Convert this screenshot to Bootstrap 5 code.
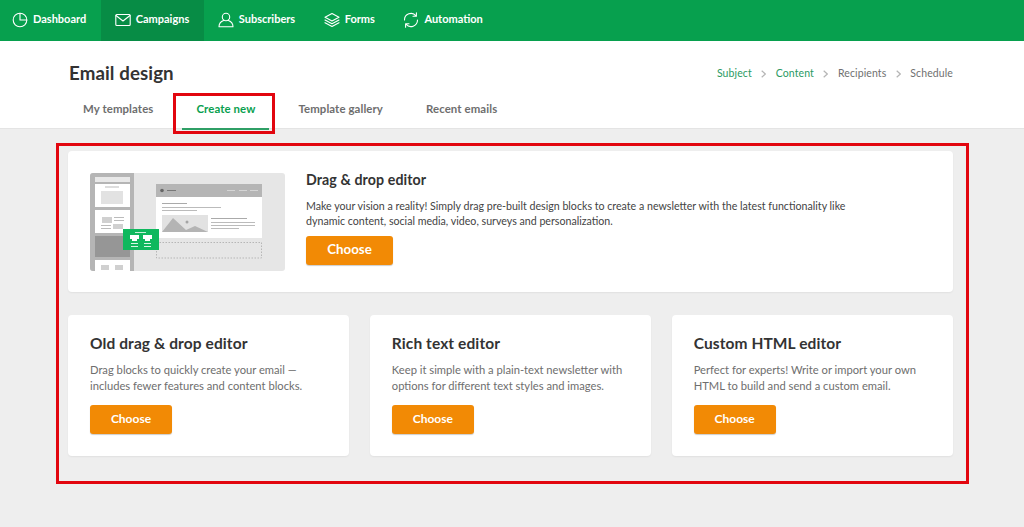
<!DOCTYPE html>
<html lang="en">
<head>
<meta charset="utf-8">
<title>Email design</title>
<link href="https://cdn.jsdelivr.net/npm/bootstrap@5.3.0/dist/css/bootstrap.min.css" rel="stylesheet">
<style>
html,body{height:527px;overflow:hidden}
body{background:#eeeeee;font-family:"Lato","Liberation Sans",sans-serif;color:#333;position:relative}
.topbar{background:#07a04e;height:41px;padding:0}
.topitem{display:flex;align-items:center;gap:5px;height:41px;padding:0 14.500px 2px 14px;color:#fff;font-size:11px;font-weight:700;letter-spacing:0;text-decoration:none}
.topitem:first-child{padding-left:12px}
.topitem svg{width:16px;height:16px;flex:none;fill:none;stroke:#fff;stroke-width:1.1;stroke-linecap:round;stroke-linejoin:round}
.topitem.current{background:#078c45}
.headarea{height:88px;background:#fff;border-bottom:1px solid #e4e4e4;padding:0 71px 0 69px}
.pagetitle{font-size:18.7px;font-weight:700;margin:0;color:#333;line-height:22px;letter-spacing:.1px}
.headtop{padding-top:21px}
.steps{font-size:10.5px;color:#707070;gap:9.5px;letter-spacing:.1px;padding-top:4px}
.steps .done{color:#2a9a63}
.steps svg{width:5px;height:8px;fill:none;stroke:#b5b5b5;stroke-width:1.2}
.tabstrip{margin-top:11px;gap:0}
.tabitem{display:block;height:35px;line-height:28px;font-size:11.4px;font-weight:700;color:#6e6e6e;text-decoration:none;padding:0 14px;letter-spacing:.1px;margin-right:15px;border-bottom:2px solid transparent;text-align:center}
.tabitem.current{color:#09a04f;border-bottom-color:#2f9f66}
.mainarea{padding:22px 71px 0 68px}
.panel{background:#fff;border-radius:4px;box-shadow:0 1px 2px rgba(0,0,0,.06);border:0}
.panelwide{height:141px;padding:21px 22px;margin-bottom:23px;gap:21px}
.paneltrio{gap:20.500px}
.paneltrio .panel{flex:1 1 0;height:141px;padding:19px 22px}
.art{width:195px;height:98px;flex:none;display:block;margin-top:1px}
.wideh{font-size:14.2px;font-weight:700;margin:0 0 10px;line-height:16px;color:#333;letter-spacing:.1px}
.widep{font-size:10.65px;line-height:15px;color:#444;margin:0 0 8px;width:560px}
.smallh{font-size:15.5px;font-weight:700;margin:0 0 10px;line-height:18px;color:#333;letter-spacing:.1px}
.smallp{font-size:11.2px;line-height:16px;color:#6e6e6e;margin:0 0 10.500px}
.pick{background:#f28a05;color:#fff;font-weight:700;border:0;border-radius:3px;box-shadow:0 1px 1px rgba(0,0,0,.2);padding:0;display:block;text-align:center}
.pick:hover{background:#f28a05;color:#fff}
.pickbig{width:87px;height:29px;font-size:13.3px;line-height:26px}
.picksmall{width:82px;height:29px;font-size:12px;line-height:27px}
.mark1,.mark2{position:absolute;border:3px solid #e2060f;pointer-events:none}
.mark1{left:173px;top:93px;width:102px;height:41px}
.mark2{left:56px;top:143px;width:913px;height:341px}
</style>
</head>
<body>
<nav class="topbar d-flex">
  <a class="topitem" href="#"><svg viewBox="0 0 16 16"><circle cx="8" cy="8" r="6.8"/><path d="M8 1.2V8h6.8"/></svg>Dashboard</a>
  <a class="topitem current" href="#"><svg viewBox="0 0 16 16"><rect x=".8" y="2.5" width="14.4" height="11" rx="1"/><path d="M1 3.5l7 5.5 7-5.5"/></svg>Campaigns</a>
  <a class="topitem" href="#"><svg viewBox="0 0 16 16"><circle cx="8" cy="5" r="3.7"/><path d="M5.6 8.5C2.6 9.5 1 11 1 14.8h14c0-3.8-1.6-5.3-4.6-6.3"/></svg>Subscribers</a>
  <a class="topitem" href="#"><svg viewBox="0 0 16 16"><path d="M8 1.5l7 3.8-7 3.8-7-3.8zM1 8l7 3.8L15 8M1 10.7l7 3.8 7-3.8"/></svg>Forms</a>
  <a class="topitem" href="#"><svg viewBox="0 0 16 16"><path d="M1.5 8A6.5 6.5 0 0 1 13 3.8M14.500 8A6.500 6.500 0 0 1 3 12.200M13.400 .8v3.400H10M2.600 15.200v-3.400H6"/></svg>Automation</a>
</nav>
<header class="headarea">
  <div class="headtop d-flex justify-content-between align-items-start">
    <h1 class="pagetitle">Email design</h1>
    <div class="steps d-flex align-items-center">
      <span class="done">Subject</span><svg viewBox="0 0 5 8"><path d="M.7.7L4.300 4 .7 7.300"/></svg>
      <span class="done">Content</span><svg viewBox="0 0 5 8"><path d="M.7.7L4.300 4 .7 7.300"/></svg>
      <span>Recipients</span><svg viewBox="0 0 5 8"><path d="M.7.7L4.300 4 .7 7.300"/></svg>
      <span>Schedule</span>
    </div>
  </div>
  <div class="tabstrip d-flex">
    <a class="tabitem" href="#">My templates</a>
    <a class="tabitem current" href="#">Create new</a>
    <a class="tabitem" href="#">Template gallery</a>
    <a class="tabitem" href="#">Recent emails</a>
  </div>
</header>
<main class="mainarea">
  <section class="panel panelwide d-flex">
    <svg class="art" viewBox="0 0 195 98">
      <rect width="195" height="98" rx="3" fill="#e6e6e6"/>
      <path d="M3 0h41v98H3a3 3 0 0 1-3-3V3a3 3 0 0 1 3-3z" fill="#b5b5b5"/>
      <rect x="5" y="4" width="35" height="5" fill="#e8e8e8"/>
      <rect x="5" y="11" width="35" height="23" fill="#fff"/>
      <rect x="11" y="18" width="22" height="13" fill="#e2e2e2"/>
      <rect x="15" y="13.500" width="14" height="1" fill="#bbb"/>
      <rect x="5" y="37" width="35" height="23" fill="#fff"/>
      <rect x="12" y="44" width="10" height="6" fill="#d0d0d0"/><rect x="24" y="44" width="10" height="1" fill="#bbb"/><rect x="24" y="47" width="10" height="1" fill="#bbb"/>
      <rect x="23" y="51" width="10" height="5" fill="#d0d0d0"/><rect x="11" y="52" width="10" height="1" fill="#bbb"/><rect x="11" y="55" width="10" height="1" fill="#bbb"/>
      <rect x="5" y="63" width="35" height="21" fill="#969696"/>
      <rect x="5" y="87" width="35" height="11" fill="#fff"/>
      <rect x="11" y="92" width="8" height="5" fill="#d0d0d0"/><rect x="25" y="92" width="8" height="5" fill="#d0d0d0"/>
      <rect x="66" y="11" width="106" height="13" fill="#b5b5b5"/>
      <circle cx="72" cy="17.500" r="1.800" fill="#666"/><rect x="77" y="17" width="9" height="1" fill="#777"/>
      <rect x="137" y="17" width="8" height="1" fill="#d5d5d5"/><rect x="149" y="17" width="8" height="1" fill="#d5d5d5"/><rect x="160" y="17" width="8" height="1" fill="#d5d5d5"/>
      <rect x="66" y="24" width="106" height="41" fill="#fff"/>
      <rect x="72" y="30" width="25" height="1" fill="#aaa"/><rect x="72" y="34" width="59" height="1" fill="#bbb"/><rect x="72" y="37" width="35" height="1" fill="#bbb"/>
      <rect x="72" y="42" width="46" height="17" fill="#e2e2e2"/>
      <path d="M72 59l11-14 13 12 9-4 13 6z" fill="#b4b4b4"/><circle cx="97" cy="49" r="1.500" fill="#a5a5a5"/>
      <rect x="121" y="45" width="36" height="1" fill="#aaa"/><rect x="121" y="49" width="44" height="1" fill="#bbb"/><rect x="121" y="52" width="44" height="1" fill="#bbb"/><rect x="121" y="55" width="28" height="1" fill="#bbb"/>
      <rect x="66.500" y="69.500" width="105" height="15.500" fill="none" stroke="#aaa" stroke-width=".8" stroke-dasharray="1.500 1.500"/>
      <rect x="33" y="56" width="36" height="21" fill="#10b85e"/>
      <rect x="45" y="59" width="11" height="1" fill="#c8f0d8"/>
      <path d="M40 62h9v4h-2v2h-5v-2h-2zM53 62h9v4h-2v2h-5v-2h-2z" fill="#fff"/>
      <rect x="41" y="70" width="7" height="1" fill="#d8f5e4"/><rect x="54" y="70" width="7" height="1" fill="#d8f5e4"/>
      <rect x="41" y="73" width="7" height="1" fill="#d8f5e4"/><rect x="54" y="73" width="7" height="1" fill="#d8f5e4"/>
    </svg>
    <div>
      <h2 class="wideh">Drag &amp; drop editor</h2>
      <p class="widep">Make your vision a reality! Simply drag pre-built design blocks to create a newsletter with the latest functionality like dynamic content, social media, video, surveys and personalization.</p>
      <a class="btn pick pickbig" href="#">Choose</a>
    </div>
  </section>
  <section class="paneltrio d-flex">
    <div class="panel">
      <h2 class="smallh">Old drag &amp; drop editor</h2>
      <p class="smallp">Drag blocks to quickly create your email — includes fewer features and content blocks.</p>
      <a class="btn pick picksmall" href="#">Choose</a>
    </div>
    <div class="panel">
      <h2 class="smallh">Rich text editor</h2>
      <p class="smallp">Keep it simple with a plain-text newsletter with options for different text styles and images.</p>
      <a class="btn pick picksmall" href="#">Choose</a>
    </div>
    <div class="panel">
      <h2 class="smallh">Custom HTML editor</h2>
      <p class="smallp">Perfect for experts! Write or import your own HTML to build and send a custom email.</p>
      <a class="btn pick picksmall" href="#">Choose</a>
    </div>
  </section>
</main>
<div class="mark1"></div>
<div class="mark2"></div>
</body>
</html>
